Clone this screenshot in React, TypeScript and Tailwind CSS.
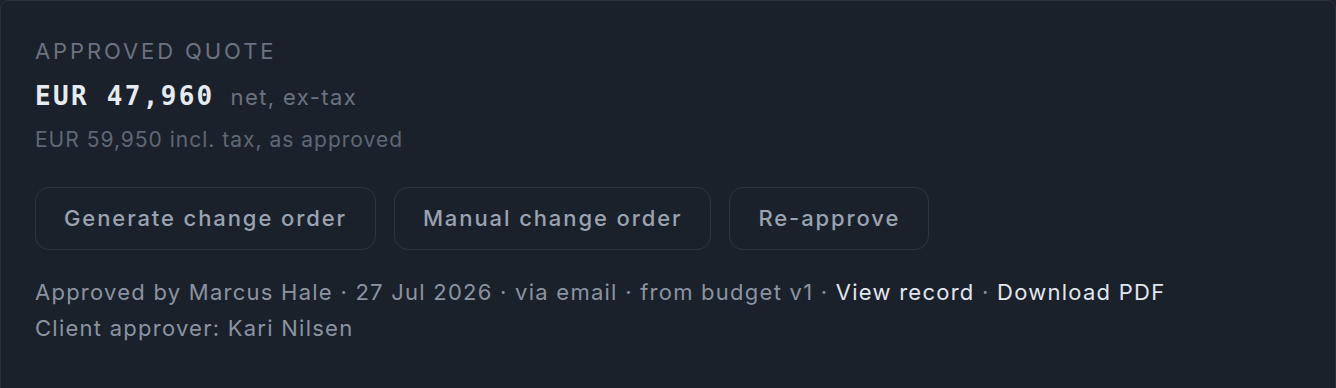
export default function App() {
  const actions = ['Generate change order', 'Manual change order', 'Re-approve'];

  return (
    <div className="min-h-screen bg-[#1b212b]">
      <section className="h-[400px] rounded-lg border border-[#2a303a] bg-[#1b212b] px-[34px] pt-[36px] font-['Inter',sans-serif]">
        {/* Quote header */}
        <div className="text-[22px] leading-7 uppercase tracking-[2.9px] text-[#6b7280]">Approved quote</div>
        <div className="mt-3 flex items-baseline gap-[16px]">
          <span className="font-['DejaVu_Sans_Mono',monospace] text-[26px] font-bold tracking-[2.3px] text-[#e6eaf1]">
            EUR 47,960
          </span>
          <span className="text-[22px] tracking-[1.4px] text-[#6b7280]">net, ex-tax</span>
        </div>
        <div className="mt-2 text-[21px] tracking-[1px] text-[#5f6774]">EUR 59,950 incl. tax, as approved</div>

        {/* Actions */}
        <div className="mt-[31px] flex gap-[18px]">
          {actions.map((label) => (
            <button
              key={label}
              className="h-[63px] rounded-[14px] border border-[#2f3540] px-[28px] text-[22px] font-medium tracking-[1.9px] text-[#9aa3b2]"
            >
              {label}
            </button>
          ))}
        </div>

        {/* Approval meta */}
        <div className="mt-[24px] text-[22px] leading-9 tracking-[1.25px] text-[#8b93a1]">
          <p>
            Approved by Marcus Hale · 27 Jul 2026 · via email · from budget v1 ·{' '}
            <a className="text-[#e2e6ee]">View record</a> · <a className="text-[#e2e6ee]">Download PDF</a>
          </p>
          <p>Client approver: Kari Nilsen</p>
        </div>
      </section>
    </div>
  );
}
